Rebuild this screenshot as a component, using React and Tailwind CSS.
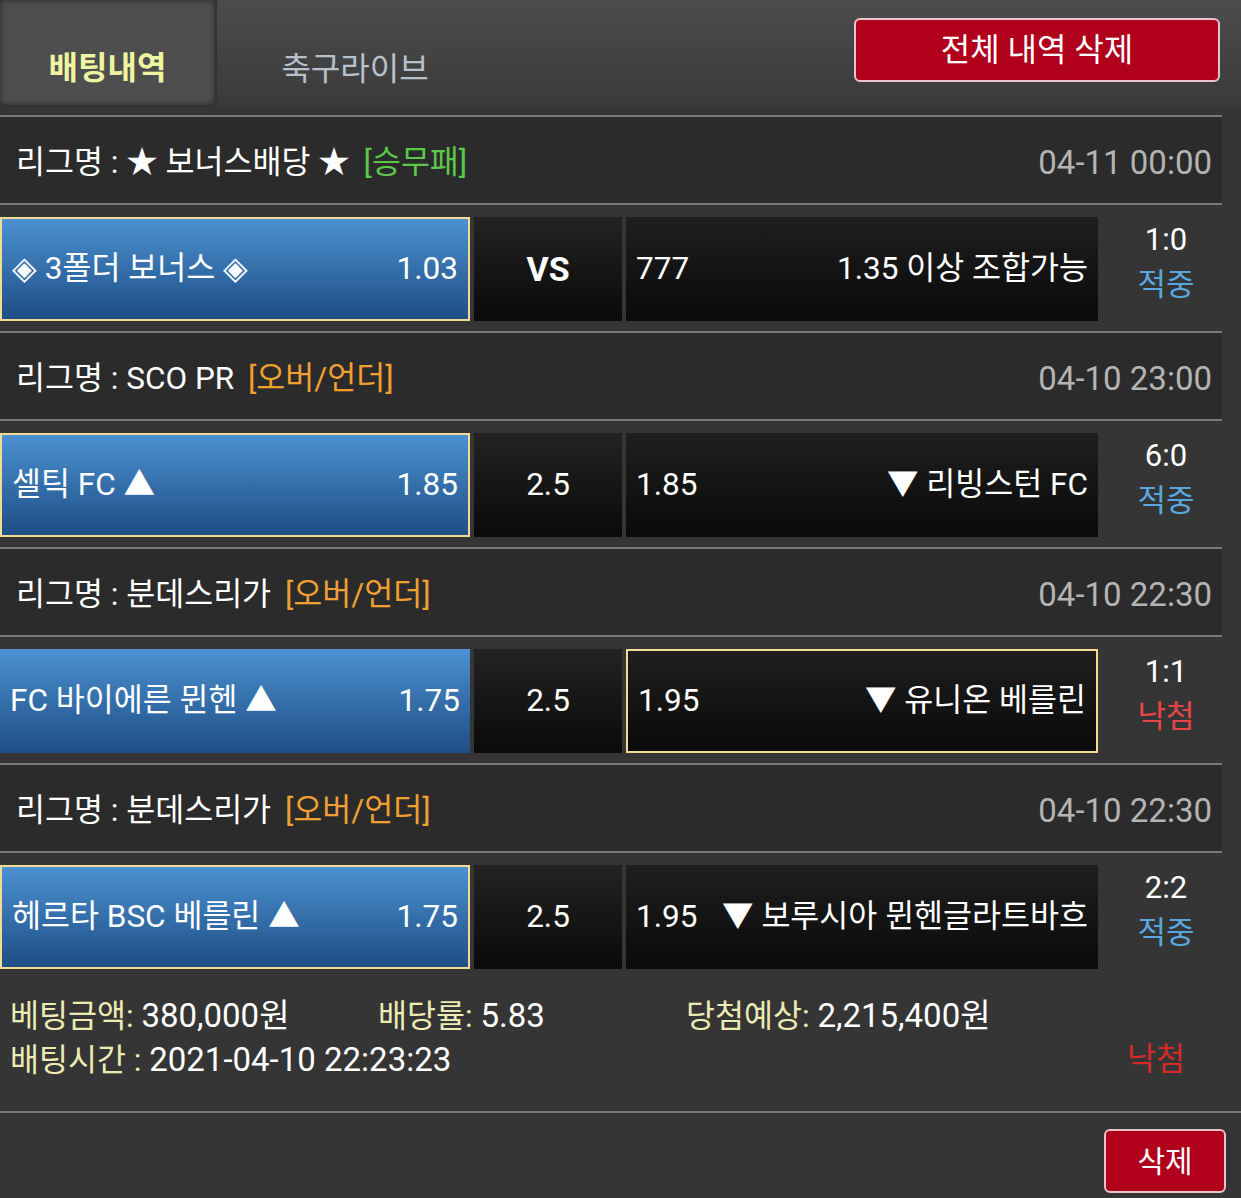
import React from 'react';

const bets = [
  {
    league: '★ 보너스배당 ★',
    type: '[승무패]',
    typeColor: 'text-[#5cc84a]',
    date: '04-11 00:00',
    home: '◈ 3폴더 보너스 ◈',
    homeOdds: '1.03',
    mid: 'VS',
    awayOdds: '777',
    away: '1.35 이상 조합가능',
    score: '1:0',
    result: '적중',
    pick: 'home',
  },
  {
    league: 'SCO PR',
    type: '[오버/언더]',
    typeColor: 'text-[#f0a030]',
    date: '04-10 23:00',
    home: '셀틱 FC ▲',
    homeOdds: '1.85',
    mid: '2.5',
    awayOdds: '1.85',
    away: '▼ 리빙스턴 FC',
    score: '6:0',
    result: '적중',
    pick: 'home',
  },
  {
    league: '분데스리가',
    type: '[오버/언더]',
    typeColor: 'text-[#f0a030]',
    date: '04-10 22:30',
    home: 'FC 바이에른 뮌헨 ▲',
    homeOdds: '1.75',
    mid: '2.5',
    awayOdds: '1.95',
    away: '▼ 유니온 베를린',
    score: '1:1',
    result: '낙첨',
    pick: 'away',
  },
  {
    league: '분데스리가',
    type: '[오버/언더]',
    typeColor: 'text-[#f0a030]',
    date: '04-10 22:30',
    home: '헤르타 BSC 베를린 ▲',
    homeOdds: '1.75',
    mid: '2.5',
    awayOdds: '1.95',
    away: '▼ 보루시아 뮌헨글라트바흐',
    score: '2:2',
    result: '적중',
    pick: 'home',
  },
];

const BetBlock = ({ bet }) => {
  const homePicked = bet.pick === 'home';
  const awayPicked = bet.pick === 'away';
  return (
    <div>
      <div className="w-[1222px] h-[90px] border-y-2 border-[#7a7a7a] bg-[#2b2b2b] flex items-center justify-between pl-[16px] pr-[10px] pt-[5px]">
        <div className="text-[31.5px] text-white whitespace-nowrap">
          리그명 : {bet.league} <span className={`ml-[6px] ${bet.typeColor}`}>{bet.type}</span>
        </div>
        <div className="text-[33px] text-[#b4b4b4]">{bet.date}</div>
      </div>
      <div className="mt-[12px] mb-[10px] h-[104px] flex">
        <div
          className={`w-[470px] flex items-center justify-between pl-[10px] pr-[10px] bg-gradient-to-b from-[#4b92d2] to-[#1f4e85] text-white text-[31.5px] ${
            homePicked ? 'border-2 border-[#f2dc94]' : ''
          }`}
        >
          <span className="whitespace-nowrap">{bet.home}</span>
          <span>{bet.homeOdds}</span>
        </div>
        <div className="ml-[4px] w-[148px] flex items-center justify-center bg-gradient-to-b from-[#232323] to-[#0a0a0a] text-white">
          <span className={bet.mid === 'VS' ? 'font-bold text-[34px]' : 'text-[31.5px]'}>{bet.mid}</span>
        </div>
        <div
          className={`ml-[4px] w-[472px] flex items-center justify-between pl-[10px] pr-[10px] bg-gradient-to-b from-[#1f1f1f] to-[#0a0a0a] text-white text-[31.5px] ${
            awayPicked ? 'border-2 border-[#f2dc94]' : ''
          }`}
        >
          <span>{bet.awayOdds}</span>
          <span className="whitespace-nowrap">{bet.away}</span>
        </div>
        <div className="w-[136px] flex flex-col items-center justify-center pb-[15px] text-[31px] leading-[45px]">
          <span className="text-white">{bet.score}</span>
          <span className={bet.result === '적중' ? 'text-[#5aa6de]' : 'text-[#e8454a]'}>{bet.result}</span>
        </div>
      </div>
    </div>
  );
};

const App = () => {
  return (
    <div
      className="w-[1241px] h-[1198px] overflow-hidden bg-[#353535]"
      style={{ fontFamily: 'Roboto, "Noto Sans CJK KR", sans-serif' }}
    >
      <div className="h-[107px] flex bg-gradient-to-b from-[#4c4c4c] to-[#3a3a3a]">
        <div className="w-[217px] h-full flex items-center justify-center pt-[30px] bg-[#4e4e4e] border-r-2 border-b-2 border-[#333] shadow-[inset_0_0_6px_rgba(0,0,0,0.5)]">
          <span className="text-[32px] font-bold text-[#eef5a0]">배팅내역</span>
        </div>
        <div className="w-[276px] flex items-center justify-center pt-[30px]">
          <span className="text-[32px] text-[#b8c0cc]">축구라이브</span>
        </div>
        <div className="flex-1" />
        <div className="pt-[18px] pr-[21px]">
          <button className="w-[366px] h-[64px] rounded-[6px] border-2 border-[#e6c4c8] bg-[#b0001c] text-white text-[32px] flex items-center justify-center">
            전체 내역 삭제
          </button>
        </div>
      </div>
      <div className="pt-[8px]">
        {bets.map((bet, i) => (
          <BetBlock key={i} bet={bet} />
        ))}
      </div>
      <div className="pt-[15px] pl-[10px] pr-[10px] h-[132px] text-[31.5px]">
        <div className="flex h-[44px] items-center">
          <div className="w-[368px]">
            <span className="text-[#ecebb4]">베팅금액:</span> <span className="text-white text-[33px]">380,000원</span>
          </div>
          <div className="w-[308px]">
            <span className="text-[#ecebb4]">배당률:</span> <span className="text-white text-[33px]">5.83</span>
          </div>
          <div>
            <span className="text-[#ecebb4]">당첨예상:</span> <span className="text-white text-[33px]">2,215,400원</span>
          </div>
        </div>
        <div className="flex h-[44px] items-center justify-between">
          <div>
            <span className="text-[#ecebb4]">배팅시간 :</span> <span className="text-white text-[33px]">2021-04-10 22:23:23</span>
          </div>
          <span className="text-[#d42a2a] mr-[46px]">낙첨</span>
        </div>
      </div>
      <div className="border-t-2 border-[#7a7a7a] flex justify-end pt-[16px] pr-[15px]">
        <button className="w-[122px] h-[64px] rounded-[6px] border-2 border-[#e6c4c8] bg-[#b0001c] text-white text-[30px] flex items-center justify-center">
          삭제
        </button>
      </div>
    </div>
  );
};

export default App;
